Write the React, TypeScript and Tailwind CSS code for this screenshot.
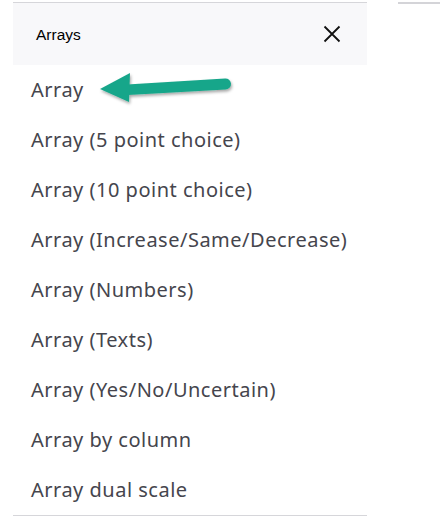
const items = [
  "Array",
  "Array (5 point choice)",
  "Array (10 point choice)",
  "Array (Increase/Same/Decrease)",
  "Array (Numbers)",
  "Array (Texts)",
  "Array (Yes/No/Uncertain)",
  "Array by column",
  "Array dual scale",
];

function Arrow() {
  return (
    <svg className="absolute left-[94px] top-[68px]" width="142" height="42" viewBox="94 68 142 42">
      <defs>
        <filter id="sh" x="-20%" y="-40%" width="140%" height="180%">
          <feDropShadow dx="1" dy="2" stdDeviation="1.5" floodColor="#000" floodOpacity="0.35" />
        </filter>
      </defs>
      <g filter="url(#sh)" fill="#19a68a">
        <path d="M127 84.5 L225 78.5 A5.5 5.5 0 0 1 226 89.5 L128 95 Z" />
        <path d="M100 89 L130 73 L129 102 Z" />
      </g>
    </svg>
  );
}

export default function App() {
  return (
    <div className="relative w-[440px] h-[518px] bg-white overflow-hidden">
      <div className="absolute right-0 top-[2px] w-[42px] h-[2px] bg-[#d4d4d8]" />
      <div className="ml-[13px] mt-[2px] w-[354px] border-t border-b border-[#d6d6da]">
        <div className="h-[62px] bg-[#f8f8fa] flex items-center justify-between pl-[23px] pr-[26px]">
          <span className="text-[15.5px] text-black mt-[2px]" style={{ fontFamily: "'Liberation Sans', Arial, sans-serif" }}>
            Arrays
          </span>
          <svg width="18" height="18" viewBox="0 0 18 18" className="mb-[1px]">
            <path d="M1.5 1.5 L16.5 16.5 M16.5 1.5 L1.5 16.5" stroke="#111" strokeWidth="1.8" />
          </svg>
        </div>
        <ul>
          {items.map((it) => (
            <li
              key={it}
              className="h-[50px] flex items-center pl-[18px] text-[20px] tracking-[0.5px] text-[#45454d]"
              style={{ fontFamily: "'Noto Sans', sans-serif" }}
            >
              {it}
            </li>
          ))}
        </ul>
      </div>
      <Arrow />
    </div>
  );
}
